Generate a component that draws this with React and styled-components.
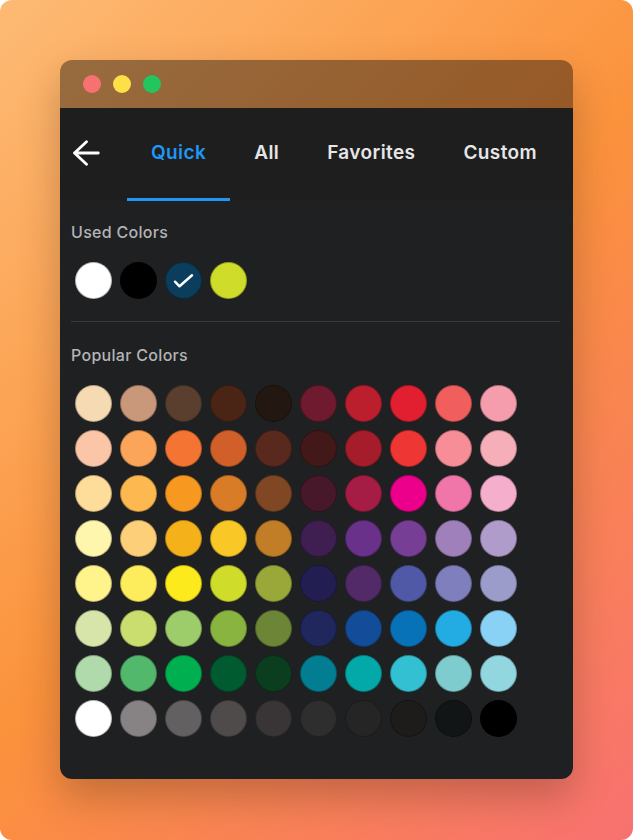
import React, { useState } from 'react';
import styled, { createGlobalStyle } from 'styled-components';

const GlobalStyle = createGlobalStyle`
  html, body {
    margin: 0;
    padding: 0;
    background: #ffffff;
  }
  body {
    font-family: Inter, "Liberation Sans", sans-serif;
  }
`;

const Frame = styled.div`
  width: 633px;
  height: 840px;
  box-sizing: border-box;
  padding: 60px;
  border-radius: 12px;
  background: linear-gradient(135deg, #fdba74 0%, #fb923c 50%, #f87171 100%);
`;

const Window = styled.div`
  width: 513px;
  border-radius: 12px;
  overflow: hidden;
  box-shadow: 0 18px 40px rgba(0, 0, 0, 0.22);
`;

const TitleBar = styled.div`
  height: 48px;
  display: flex;
  align-items: center;
  gap: 12px;
  padding-left: 23px;
  background: rgba(0, 0, 0, 0.4);
`;

const Light = styled.span`
  width: 18px;
  height: 18px;
  border-radius: 50%;
  background: ${(p) => p.color};
`;

const Body = styled.div`
  background: #1f2022;
`;

const Header = styled.div`
  display: flex;
  align-items: stretch;
  height: 93px;
  padding-left: 12px;
  background: #1e1e1f;
`;

const BackButton = styled.button`
  width: 55px;
  padding: 0 0 4px;
  border: none;
  background: none;
  display: flex;
  align-items: center;
  cursor: pointer;
`;

const Tab = styled.button`
  position: relative;
  padding: 0 24px 4px;
  border: none;
  background: none;
  font-family: inherit;
  font-size: 19px;
  font-weight: 600;
  letter-spacing: 0.4px;
  color: ${(p) => (p.active ? '#2196f3' : '#e6e6e6')};
  cursor: pointer;
  &::after {
    content: '';
    position: absolute;
    left: 0;
    right: 0;
    bottom: 0;
    height: 3px;
    background: ${(p) => (p.active ? '#2196f3' : 'transparent')};
  }
`;

const Content = styled.div`
  padding: 20px 13px 38px 11px;
`;

const Label = styled.div`
  font-size: 16px;
  line-height: 22px;
  font-weight: 500;
  letter-spacing: 0.3px;
  color: #b4b4b6;
`;

const Swatches = styled.div`
  display: grid;
  grid-template-columns: repeat(${(p) => p.cols}, 45px);
  grid-auto-rows: 45px;
  margin-top: 15px;
`;

const Swatch = styled.button`
  width: 37px;
  height: 37px;
  margin: 4px;
  padding: 0;
  border-radius: 50%;
  border: 1px solid rgba(0, 0, 0, 0.28);
  box-sizing: border-box;
  background: ${(p) => p.color};
  display: flex;
  align-items: center;
  justify-content: center;
  cursor: pointer;
`;

const Divider = styled.hr`
  margin: 18px 0 22px;
  border: none;
  height: 1px;
  background: #3a3b3e;
`;

const used = ['#ffffff', '#000000', '#0b3d5c', '#cfdc29'];

const popular = [
  ['#f6dab3', '#c9977a', '#5a3f2e', '#4a2515', '#221811', '#6f1a2e', '#bb1f2e', '#e21f31', '#f05f5d', '#f59dac'],
  ['#fbc5a8', '#fba55a', '#f47533', '#d05f2a', '#5a291d', '#421819', '#a51d2b', '#ee3734', '#f68d97', '#f6aeb8'],
  ['#fedc99', '#fdb94f', '#f79820', '#d97c27', '#804725', '#46182a', '#a51c45', '#ec008b', '#f075a8', '#f6aecd'],
  ['#fff6ae', '#fecf79', '#f5b11a', '#f9c827', '#c27e27', '#3f1f52', '#69318a', '#773e96', '#a080bb', '#b09ccb'],
  ['#fff38c', '#fdec5b', '#fdea1c', '#cfdc29', '#9aa83a', '#231e52', '#522a68', '#5059a6', '#7f7fbe', '#9c9ccb'],
  ['#d8e5aa', '#cade6f', '#9ccd6a', '#8ab440', '#6c8537', '#1f275c', '#134d9a', '#0872b9', '#23abe3', '#8ad2f5'],
  ['#b0d9ac', '#51b86c', '#00b050', '#005c30', '#0b3e1e', '#027d92', '#02a9a8', '#33c0d2', '#7fccce', '#92d6df'],
  ['#ffffff', '#878283', '#626061', '#4f4b4a', '#393536', '#2e2e2e', '#252525', '#1e1b1b', '#111515', '#000000'],
];

const tabs = ['Quick', 'All', 'Favorites', 'Custom'];

const BackArrow = () => (
  <svg width="28" height="26" viewBox="0 0 28 26" fill="none">
    <path
      d="M26.3 13H2.5M14.5 1.8L2.5 13l12 11.2"
      stroke="#ffffff"
      strokeWidth="2.8"
      strokeLinecap="round"
      strokeLinejoin="round"
    />
  </svg>
);

const Check = () => (
  <svg width="37" height="37" viewBox="0 0 37 37" fill="none">
    <path
      d="M9.5 19.8l4.8 4.8L27.5 13"
      stroke="#ffffff"
      strokeWidth="2.6"
      strokeLinecap="round"
      strokeLinejoin="round"
    />
  </svg>
);

const App = () => {
  const [tab, setTab] = useState('Quick');
  const [selected, setSelected] = useState('#0b3d5c');

  return (
    <>
      <GlobalStyle />
      <Frame>
        <Window>
          <TitleBar>
            <Light color="#f87171" />
            <Light color="#fde047" />
            <Light color="#22c55e" />
          </TitleBar>
          <Body>
            <Header>
              <BackButton aria-label="Back">
                <BackArrow />
              </BackButton>
              {tabs.map((t) => (
                <Tab key={t} active={tab === t} onClick={() => setTab(t)}>
                  {t}
                </Tab>
              ))}
            </Header>
            <Content>
              <Label>Used Colors</Label>
              <Swatches cols={4}>
                {used.map((c) => (
                  <Swatch key={c} color={c} onClick={() => setSelected(c)}>
                    {selected === c && <Check />}
                  </Swatch>
                ))}
              </Swatches>
              <Divider />
              <Label>Popular Colors</Label>
              <Swatches cols={10}>
                {popular.flat().map((c, i) => (
                  <Swatch key={i} color={c} onClick={() => setSelected(c)} />
                ))}
              </Swatches>
            </Content>
          </Body>
        </Window>
      </Frame>
    </>
  );
};

export default App;
